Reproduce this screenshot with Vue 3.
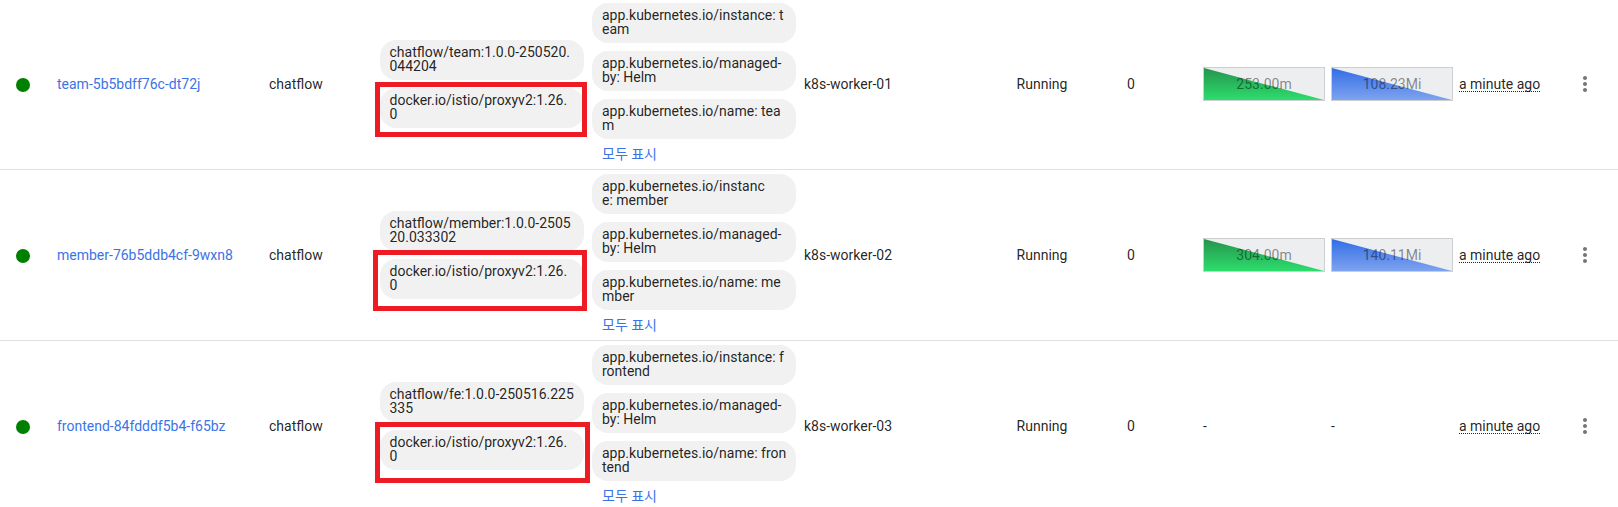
<script setup>
const pods = [
  {
    key: 'team',
    name: 'team-5b5bdff76c-dt72j',
    image: ['chatflow/team:1.0.0-250520.', '044204'],
    labels: [
      ['app.kubernetes.io/instance: t', 'eam'],
      ['app.kubernetes.io/managed-', 'by: Helm'],
      ['app.kubernetes.io/name: tea', 'm'],
    ],
    node: 'k8s-worker-01',
    cpu: '253.00m',
    memory: '108.23Mi',
  },
  {
    key: 'member',
    name: 'member-76b5ddb4cf-9wxn8',
    image: ['chatflow/member:1.0.0-2505', '20.033302'],
    labels: [
      ['app.kubernetes.io/instanc', 'e: member'],
      ['app.kubernetes.io/managed-', 'by: Helm'],
      ['app.kubernetes.io/name: me', 'mber'],
    ],
    node: 'k8s-worker-02',
    cpu: '304.00m',
    memory: '140.11Mi',
  },
  {
    key: 'frontend',
    name: 'frontend-84fdddf5b4-f65bz',
    image: ['chatflow/fe:1.0.0-250516.225', '335'],
    labels: [
      ['app.kubernetes.io/instance: f', 'rontend'],
      ['app.kubernetes.io/managed-', 'by: Helm'],
      ['app.kubernetes.io/name: fron', 'tend'],
    ],
    node: 'k8s-worker-03',
    cpu: null,
    memory: null,
  },
]
const proxyImage = ['docker.io/istio/proxyv2:1.26.', '0']
</script>

<template>
  <main class="table">
    <svg class="defs" width="0" height="0" aria-hidden="true">
      <defs>
        <linearGradient id="cpu-fill" x1="0" y1="0" x2="0" y2="1">
          <stop offset="0" stop-color="#26934c" />
          <stop offset="1" stop-color="#2ddd6d" />
        </linearGradient>
        <linearGradient id="memory-fill" x1="0" y1="0" x2="0" y2="1">
          <stop offset="0" stop-color="#326de6" />
          <stop offset="1" stop-color="#7ea3ef" />
        </linearGradient>
      </defs>
    </svg>
    <div v-for="pod in pods" :key="pod.key" class="row">
      <div class="status"><span class="dot"></span></div>
      <a class="link">{{ pod.name }}</a>
      <div>chatflow</div>
      <div class="chips images">
        <div class="chip">{{ pod.image.join('\n') }}</div>
        <div class="chip">{{ proxyImage.join('\n') }}<span class="mark" :class="pod.key"></span></div>
      </div>
      <div class="chips labels">
        <div v-for="(label, i) in pod.labels" :key="i" class="chip">{{ label.join('\n') }}</div>
        <a class="link more">모두 표시</a>
      </div>
      <div>{{ pod.node }}</div>
      <div class="phase">Running</div>
      <div>0</div>
      <div v-for="kind in ['cpu', 'memory']" :key="kind">
        <div v-if="pod[kind]" class="chart">
          <svg width="120" height="32" viewBox="0 0 120 32">
            <path d="M0 0L120 32H0Z" :fill="`url(#${kind}-fill)`" />
          </svg>
          <span class="value">{{ pod[kind] }}</span>
        </div>
        <template v-else>-</template>
      </div>
      <div><span class="time">a minute ago</span></div>
      <svg class="menu" width="24" height="24" viewBox="0 0 24 24">
        <path d="M12 8c1.1 0 2-.9 2-2s-.9-2-2-2-2 .9-2 2 .9 2 2 2zm0 2c-1.1 0-2 .9-2 2s.9 2 2 2 2-.9 2-2-.9-2-2-2zm0 6c-1.1 0-2 .9-2 2s.9 2 2 2 2-.9 2-2-.9-2-2-2z" />
      </svg>
    </div>
  </main>
</template>

<style>
body {
  background: #fff;
}
</style>

<style scoped>
.table {
  box-sizing: border-box;
  height: 507px;
  overflow: hidden;
  font: 14px/20px Roboto, "Noto Sans CJK KR", sans-serif;
  color: rgba(0, 0, 0, 0.87);
}
.defs {
  position: absolute;
}
.row {
  display: grid;
  grid-template-columns: 57px 212px 111px 212px 212px 212px 111px 76px 128px 128px 114px 24px;
  align-items: center;
  box-sizing: border-box;
  height: 171px;
  border-bottom: 1px solid #e0e0e0;
  white-space: nowrap;
}
.row:first-of-type {
  margin-top: -1px;
}
.row:last-child {
  border-bottom-color: transparent;
}
.dot {
  display: block;
  width: 14px;
  height: 14px;
  margin: 2px 0 0 16px;
  border-radius: 50%;
  background: #008000;
}
.link {
  color: #3b73e7;
}
.chips {
  display: flex;
  flex-direction: column;
  gap: 8px;
  width: 204px;
}
.labels {
  align-self: start;
  padding-top: 4px;
}
.chip {
  position: relative;
  box-sizing: border-box;
  height: 40px;
  padding: 5px 10px 7px;
  border-radius: 16px;
  background: #f1f1f1;
  line-height: 14px;
  white-space: pre;
}
.images .chip {
  padding-left: 9.5px;
}
.more {
  margin: -3px 0 0 10px;
}
.phase {
  padding-left: 0.6px;
}
.mark {
  position: absolute;
  border: 5px solid #ed1c24;
}
.mark.team {
  inset: -6px -3px -9px -5px;
}
.mark.member {
  inset: -9px -3px -12px -7px;
}
.mark.frontend {
  inset: -8px -6px -13px -5px;
}
.chart {
  display: grid;
  box-sizing: border-box;
  width: 122px;
  height: 34px;
  border: 1px solid #ccced0;
  background: #edeef0;
}
.chart > * {
  grid-area: 1 / 1;
}
.value {
  place-self: center;
  color: rgba(0, 0, 0, 0.46);
}
.time {
  display: inline-block;
  border-bottom: 1px dotted #222;
  line-height: 14px;
}
.menu {
  fill: #757575;
}
</style>
